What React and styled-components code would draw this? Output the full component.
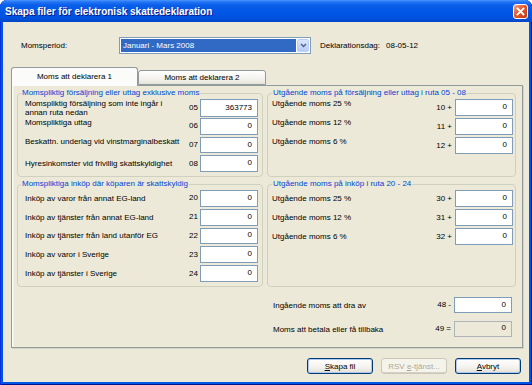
import React from 'react';
import styled, { createGlobalStyle } from 'styled-components';

const GlobalStyle = createGlobalStyle`
  html, body {
    margin: 0;
    padding: 0;
    background: #ffffff;
  }
  body {
    font-family: 'Liberation Sans', Arial, sans-serif;
    font-size: 8px;
    color: #000;
  }
`;

const leftRows = [
  { code: '05', value: '363773', label: <>Momspliktig försäljning som inte ingår i<br />annan ruta nedan</> },
  { code: '06', value: '0', label: 'Momspliktiga uttag', top: true },
  { code: '07', value: '0', label: 'Beskattn. underlag vid vinstmarginalbeskatt', top: true },
  { code: '08', value: '0', label: 'Hyresinkomster vid frivillig skattskyldighet' }
];

const purchaseRows = [
  { code: '20', label: 'Inköp av varor från annat EG-land' },
  { code: '21', label: 'Inköp av tjänster från annat EG-land' },
  { code: '22', label: 'Inköp av tjänster från land utanför EG' },
  { code: '23', label: 'Inköp av varor i Sverige' },
  { code: '24', label: 'Inköp av tjänster i Sverige' }
];

const salesVat = [
  { code: '10 +', label: 'Utgående moms 25 %' },
  { code: '11 +', label: 'Utgående moms 12 %' },
  { code: '12 +', label: 'Utgående moms 6 %' }
];

const purchaseVat = [
  { code: '30 +', label: 'Utgående moms 25 %' },
  { code: '31 +', label: 'Utgående moms 12 %' },
  { code: '32 +', label: 'Utgående moms 6 %' }
];

const Window = styled.div`
  width: 532px;
  height: 385px;
  display: flex;
  flex-direction: column;
  background: #0055e5;
  border-radius: 7px 7px 0 0;
  overflow: hidden;
  box-shadow: inset 1px 0 #0831d9, inset -1px 0 #00138c, inset 0 -1px #00138c;
`;

const TitleBar = styled.div`
  height: 22px;
  flex: none;
  display: flex;
  align-items: center;
  justify-content: space-between;
  padding: 0 4px 0 5px;
  background: linear-gradient(
    #4a96ff 0,
    #2474f5 2px,
    #0a5fe9 5px,
    #0056e6 12px,
    #0052df 18px,
    #0046c8 22px
  );
`;

const Title = styled.div`
  color: #fff;
  font-weight: bold;
  font-size: 10px;
  text-shadow: 1px 1px #0a1883;
`;

const CloseButton = styled.div`
  width: 15px;
  height: 15px;
  box-sizing: border-box;
  border: 1px solid #fff;
  border-radius: 3px;
  background: linear-gradient(135deg, #f0a48a 0%, #e0582c 45%, #c23a12 100%);
  display: flex;
  align-items: center;
  justify-content: center;
`;

const Body = styled.div`
  flex: 1;
  margin: 0 3px 3px;
  background: #ece9d8;
  display: flex;
  flex-direction: column;
  padding: 15px 6px 8px 8px;
`;

const TopRow = styled.div`
  display: grid;
  grid-template-columns: 89px 192px auto;
  column-gap: 9px;
  align-items: center;
  height: 17px;
  padding-left: 10px;
`;

const Combo = styled.div`
  height: 17px;
  box-sizing: border-box;
  border: 1px solid #7f9db9;
  background: #fff;
  display: flex;
  padding: 1px;
  gap: 1px;
`;

const ComboValue = styled.div`
  flex: 1;
  background: #316ac5;
  color: #fff;
  line-height: 13px;
  padding-left: 2px;
`;

const ComboArrow = styled.div`
  width: 12px;
  box-sizing: border-box;
  border: 1px solid #b9cdf6;
  border-radius: 2px;
  background: linear-gradient(#d9e5fd, #b7cdf7);
  display: flex;
  align-items: center;
  justify-content: center;
`;

const DateText = styled.div`
  display: flex;
  gap: 6px;
`;

const TabStrip = styled.div`
  margin-top: 13px;
  height: 18px;
  display: flex;
  align-items: flex-end;
  position: relative;
  z-index: 1;
`;

const Tab = styled.div`
  width: ${({ $active }) => ($active ? '127px' : '128px')};
  height: ${({ $active }) => ($active ? '19px' : '15px')};
  box-sizing: border-box;
  border: 1px solid #919b9c;
  border-bottom: ${({ $active }) => ($active ? 'none' : '1px solid #919b9c')};
  border-radius: 3px 3px 0 0;
  margin-bottom: ${({ $active }) => ($active ? '-1px' : '0')};
  background: ${({ $active }) =>
    $active ? '#fbfbf9' : 'linear-gradient(#ffffff, #f0efe9 70%, #e6e4da)'};
  display: flex;
  align-items: center;
  justify-content: center;
  padding-bottom: ${({ $active }) => ($active ? '1px' : '0')};
`;

const Panel = styled.div`
  height: 263px;
  box-sizing: border-box;
  border: 1px solid #919b9c;
  box-shadow: inset 1px 0 #fcfbf3, inset 2px 0 #f3f1e6, 1px 1px #d5d2c2;
  padding: 2px 6px 0 5px;
  display: grid;
  grid-template-columns: 246px 249px;
  grid-template-rows: 89px 108px auto;
  gap: 2px 4px;
`;

const Group = styled.fieldset`
  margin: 0;
  min-width: 0;
  border: 1px solid #d0d0bf;
  border-radius: 4px;
  padding: ${({ $right }) => ($right ? '1px 2px 4px 4px' : '1px 4px 4px 7px')};
  display: flex;
  flex-direction: column;
  gap: 2px;
`;

const Legend = styled.legend`
  color: #0046d5;
  line-height: 10px;
  padding: 0 1px;
  margin-left: ${({ $right }) => ($right ? '0' : '-4px')};
`;

const Row = styled.div`
  display: grid;
  grid-template-columns: minmax(0, 1fr) auto 58px;
  column-gap: ${({ $right }) => ($right ? '3px' : '2px')};
  align-items: center;
  height: ${({ $h }) => $h || 17}px;
`;

const Label = styled.div`
  white-space: nowrap;
  line-height: 9px;
  align-self: ${({ $top }) => ($top ? 'start' : 'center')};
`;

const Code = styled.div`
  text-align: right;
  line-height: 10px;
`;

const Field = styled.input`
  width: 58px;
  height: 100%;
  box-sizing: border-box;
  margin: 0;
  border: 1px solid ${({ disabled }) => (disabled ? '#b0b4b8' : '#7f9db9')};
  background: ${({ disabled }) => (disabled ? '#ece9d8' : '#fff')};
  color: #000;
  font-family: 'Liberation Sans', Arial, sans-serif;
  font-size: 8px;
  text-align: right;
  padding: 0 5px ${({ disabled }) => (disabled ? '4px' : '2px')} 0;
  outline: none;
`;

const Summary = styled.div`
  grid-column: 2;
  display: flex;
  flex-direction: column;
  gap: 8px;
  padding: 8px 4px 0 6px;
`;

const ButtonRow = styled.div`
  margin-top: 10px;
  height: 16px;
  display: flex;
  justify-content: flex-end;
  gap: 8px;
  padding-right: 2px;
`;

const Button = styled.div`
  width: 66px;
  height: 16px;
  box-sizing: border-box;
  border: 1px solid ${({ $disabled }) => ($disabled ? '#c9c7ba' : '#003c74')};
  border-radius: 3px;
  background: ${({ $disabled }) =>
    $disabled ? '#f5f4ea' : 'linear-gradient(#ffffff, #f3f2ed 60%, #e3e0d5)'};
  color: ${({ $disabled }) => ($disabled ? '#aca899' : '#000')};
  box-shadow: ${({ $default }) =>
    $default ? 'inset 0 0 0 1px #b0c8f0' : 'inset 0 -1px #d6d0c5'};
  display: flex;
  align-items: center;
  justify-content: center;
  u {
    text-decoration: underline;
  }
`;

function FormRow({ label, code, value = '0', top, right, disabled, h }) {
  return (
    <Row $right={right} $h={h}>
      <Label $top={top}>{label}</Label>
      <Code>{code}</Code>
      <Field readOnly value={value} disabled={disabled} />
    </Row>
  );
}

export default function App() {
  return (
    <Window>
      <GlobalStyle />
      <TitleBar>
        <Title>Skapa filer för elektronisk skattedeklaration</Title>
        <CloseButton>
          <svg width="9" height="9" viewBox="0 0 9 9">
            <path d="M1.5 1.5 L7.5 7.5 M7.5 1.5 L1.5 7.5" stroke="#fff" strokeWidth="1.8" strokeLinecap="square" />
          </svg>
        </CloseButton>
      </TitleBar>
      <Body>
        <TopRow>
          <div>Momsperiod:</div>
          <Combo>
            <ComboValue>Januari - Mars 2008</ComboValue>
            <ComboArrow>
              <svg width="7" height="5" viewBox="0 0 7 5">
                <path d="M1 1 L3.5 3.5 L6 1" fill="none" stroke="#4d6185" strokeWidth="1.4" />
              </svg>
            </ComboArrow>
          </Combo>
          <DateText>
            <span>Deklarationsdag:</span>
            <span>08-05-12</span>
          </DateText>
        </TopRow>

        <TabStrip>
          <Tab $active>Moms att deklarera 1</Tab>
          <Tab>Moms att deklarera 2</Tab>
        </TabStrip>

        <Panel>
          <Group>
            <Legend>Momspliktig försäljning eller uttag exklusive moms</Legend>
            {leftRows.map((r) => (
              <FormRow key={r.code} {...r} />
            ))}
          </Group>
          <Group $right>
            <Legend $right>Utgående moms på försäljning eller uttag i ruta 05 - 08</Legend>
            {salesVat.map((r) => (
              <FormRow key={r.code} {...r} right top />
            ))}
          </Group>
          <Group>
            <Legend>Momspliktiga inköp där köparen är skattskyldig</Legend>
            {purchaseRows.map((r) => (
              <FormRow key={r.code} {...r} />
            ))}
          </Group>
          <Group $right>
            <Legend $right>Utgående moms på inköp i ruta 20 - 24</Legend>
            {purchaseVat.map((r) => (
              <FormRow key={r.code} {...r} right />
            ))}
          </Group>
          <Summary>
            <FormRow label="Ingående moms att dra av" code="48 -" right h={16} />
            <FormRow label="Moms att betala eller få tillbaka" code="49 =" right disabled h={16} />
          </Summary>
        </Panel>

        <ButtonRow>
          <Button $default><span><u>S</u>kapa fil</span></Button>
          <Button $disabled><span>RSV <u>e</u>-tjänst...</span></Button>
          <Button $default><span><u>A</u>vbryt</span></Button>
        </ButtonRow>
      </Body>
    </Window>
  );
}
